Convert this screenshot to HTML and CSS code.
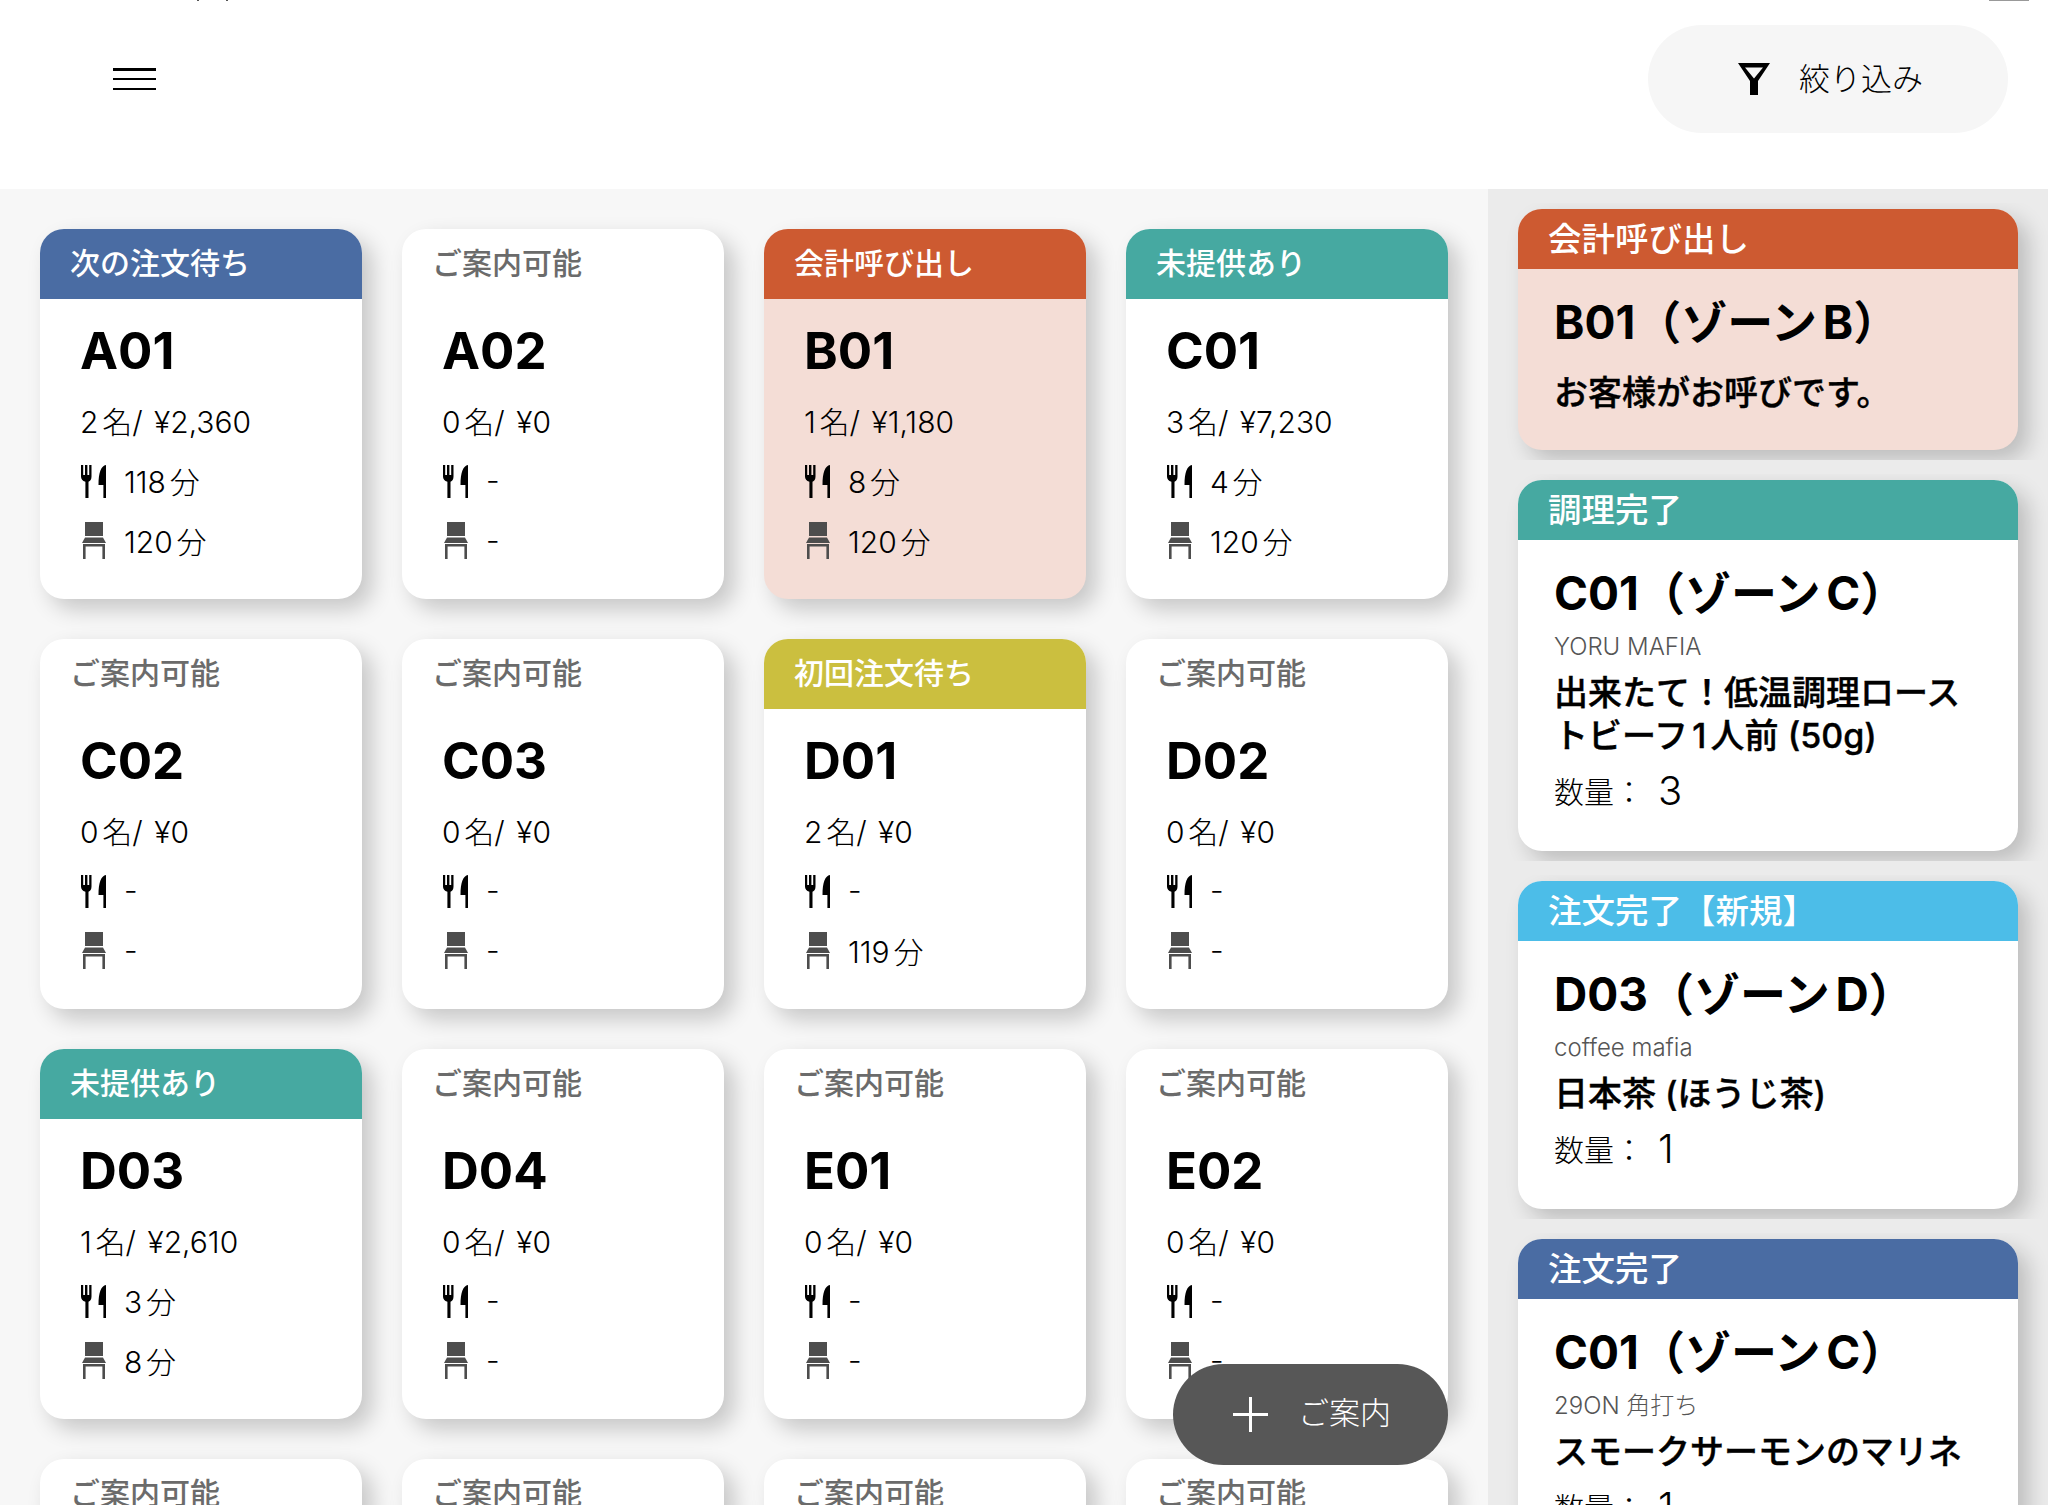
FILE: index.html
```html
<!DOCTYPE html>
<html lang="ja">
<head>
<meta charset="utf-8">
<title>テーブル</title>
<link rel="stylesheet" href="styles.css">
</head>
<body>
<svg class="defs" width="0" height="0">
  <symbol id="i-food" viewBox="0 0 26 33">
    <path d="M1 0h2.200v10H5V0h2.400v10h1.800V0h2.300v11.500c0 3-1.200 4.600-3 5.300V33H5.400V16.800c-2.900-.8-4.400-2.600-4.400-5.300z"/>
    <path d="M26 0c-4.800 1-7.500 7-7.500 20h4.900v13H26z"/>
  </symbol>
  <symbol id="i-seat" viewBox="0 0 24 37">
    <path d="M3 0h18v14H3z"/>
    <path d="M3 15.500h18l3 5.500H0z"/>
    <path d="M1 22h22v15h-2.600V24.500H3.600V37H1z"/>
  </symbol>
</svg>

<header class="topbar">
  <span class="clip-mark clip-a"></span>
  <span class="clip-mark clip-b"></span>
  <span class="clip-bar"></span>
  <button class="menu" aria-label="メニュー"><span></span><span></span><span></span></button>
  <button class="filter">
    <svg class="filter-icon" viewBox="0 0 32 32"><path fill-rule="evenodd" d="M0 0h32L20 18v14h-8V18zM7 4.500 16 15.500 25 4.500z"/></svg>
    <span class="filter-label">絞り込み</span>
  </button>
</header>

<div class="layout">
  <main class="floor">
    <article class="table"><h3 class="tag blue">次の注文待ち</h3><div class="body"><h2>A01</h2><p>2名/ ¥2,360</p><p><svg class="ico"><use href="#i-food"/></svg>118分</p><p><svg class="ico seat"><use href="#i-seat"/></svg>120分</p></div></article>
    <article class="table"><h3 class="tag free">ご案内可能</h3><div class="body"><h2>A02</h2><p>0名/ ¥0</p><p><svg class="ico"><use href="#i-food"/></svg>-</p><p><svg class="ico seat"><use href="#i-seat"/></svg>-</p></div></article>
    <article class="table pink"><h3 class="tag orange">会計呼び出し</h3><div class="body"><h2>B01</h2><p>1名/ ¥1,180</p><p><svg class="ico"><use href="#i-food"/></svg>8分</p><p><svg class="ico seat"><use href="#i-seat"/></svg>120分</p></div></article>
    <article class="table"><h3 class="tag teal">未提供あり</h3><div class="body"><h2>C01</h2><p>3名/ ¥7,230</p><p><svg class="ico"><use href="#i-food"/></svg>4分</p><p><svg class="ico seat"><use href="#i-seat"/></svg>120分</p></div></article>

    <article class="table"><h3 class="tag free">ご案内可能</h3><div class="body"><h2>C02</h2><p>0名/ ¥0</p><p><svg class="ico"><use href="#i-food"/></svg>-</p><p><svg class="ico seat"><use href="#i-seat"/></svg>-</p></div></article>
    <article class="table"><h3 class="tag free">ご案内可能</h3><div class="body"><h2>C03</h2><p>0名/ ¥0</p><p><svg class="ico"><use href="#i-food"/></svg>-</p><p><svg class="ico seat"><use href="#i-seat"/></svg>-</p></div></article>
    <article class="table"><h3 class="tag yellow">初回注文待ち</h3><div class="body"><h2>D01</h2><p>2名/ ¥0</p><p><svg class="ico"><use href="#i-food"/></svg>-</p><p><svg class="ico seat"><use href="#i-seat"/></svg>119分</p></div></article>
    <article class="table"><h3 class="tag free">ご案内可能</h3><div class="body"><h2>D02</h2><p>0名/ ¥0</p><p><svg class="ico"><use href="#i-food"/></svg>-</p><p><svg class="ico seat"><use href="#i-seat"/></svg>-</p></div></article>

    <article class="table"><h3 class="tag teal">未提供あり</h3><div class="body"><h2>D03</h2><p>1名/ ¥2,610</p><p><svg class="ico"><use href="#i-food"/></svg>3分</p><p><svg class="ico seat"><use href="#i-seat"/></svg>8分</p></div></article>
    <article class="table"><h3 class="tag free">ご案内可能</h3><div class="body"><h2>D04</h2><p>0名/ ¥0</p><p><svg class="ico"><use href="#i-food"/></svg>-</p><p><svg class="ico seat"><use href="#i-seat"/></svg>-</p></div></article>
    <article class="table"><h3 class="tag free">ご案内可能</h3><div class="body"><h2>E01</h2><p>0名/ ¥0</p><p><svg class="ico"><use href="#i-food"/></svg>-</p><p><svg class="ico seat"><use href="#i-seat"/></svg>-</p></div></article>
    <article class="table"><h3 class="tag free">ご案内可能</h3><div class="body"><h2>E02</h2><p>0名/ ¥0</p><p><svg class="ico"><use href="#i-food"/></svg>-</p><p><svg class="ico seat"><use href="#i-seat"/></svg>-</p></div></article>

    <article class="table"><h3 class="tag free">ご案内可能</h3></article>
    <article class="table"><h3 class="tag free">ご案内可能</h3></article>
    <article class="table"><h3 class="tag free">ご案内可能</h3></article>
    <article class="table"><h3 class="tag free">ご案内可能</h3></article>

    <button class="fab">
      <svg class="fab-plus" viewBox="0 0 35 35"><path d="M16 0h3v16h16v3H19v16h-3V19H0v-3h16z"/></svg>
      <span class="fab-label">ご案内</span>
    </button>
  </main>

  <aside class="feed">
    <div class="feed-item"><section class="notice pink"><h3 class="bar orange">会計呼び出し</h3><div class="notice-body"><h2>B01（ゾーンB）</h2><p class="msg">お客様がお呼びです。</p></div></section></div>
    <div class="feed-item"><section class="notice"><h3 class="bar teal">調理完了</h3><div class="notice-body"><h2>C01（ゾーンC）</h2><p class="shop">YORU MAFIA</p><p class="dish">出来たて！低温調理ローストビーフ1人前 (50g)</p><p class="qty">数量：<b>3</b></p></div></section></div>
    <div class="feed-item"><section class="notice"><h3 class="bar sky">注文完了【新規】</h3><div class="notice-body"><h2>D03（ゾーンD）</h2><p class="shop">coffee mafia</p><p class="dish">日本茶 (ほうじ茶)</p><p class="qty">数量：<b>1</b></p></div></section></div>
    <div class="feed-item"><section class="notice"><h3 class="bar blue">注文完了</h3><div class="notice-body"><h2>C01（ゾーンC）</h2><p class="shop">29ON 角打ち</p><p class="dish">スモークサーモンのマリネ</p><p class="qty">数量：<b>1</b></p></div></section></div>
  </aside>
</div>
</body>
</html>
```

FILE: styles.css
```css
* { box-sizing: border-box; }
html, body { margin: 0; height: 100%; overflow: hidden; }
body {
  font-family: "Inter", "Noto Sans CJK JP", sans-serif;
  color: #000;
  background: #fff;
  display: flex;
  flex-direction: column;
  text-autospace: normal;
}
.defs { position: absolute; }
h2, h3, p { margin: 0; }
button { font: inherit; border: 0; padding: 0; color: inherit; }

/* top bar */
.topbar {
  position: relative;
  flex: none;
  height: 189px;
  display: flex;
  justify-content: space-between;
  align-items: flex-start;
  padding: 25px 40px 0 113px;
}
.clip-mark { position: absolute; top: 0; width: 2px; height: 1px; background: #555; }
.clip-a { left: 197px; }
.clip-b { left: 226px; }
.clip-bar { position: absolute; top: 0; left: 1989px; width: 40px; height: 1px; background: #999; }
.menu {
  margin-top: 43px;
  width: 43px;
  height: 22px;
  background: none;
  display: flex;
  flex-direction: column;
  justify-content: space-between;
}
.menu span { display: block; height: 2.500px; background: #000; }
.filter {
  width: 360px;
  height: 108px;
  border-radius: 54px;
  background: #f6f6f6;
  display: flex;
  align-items: center;
  padding-left: 90px;
  gap: 29px;
  font-size: 31px;
  font-weight: 300;
}
.filter-label { padding-bottom: 6px; }
.filter-icon { width: 32px; height: 32px; }

/* page layout */
.layout { flex: 1; min-height: 0; display: flex; }
.floor {
  position: relative;
  width: 1488px;
  flex: none;
  background: #f7f7f7;
  padding: 40px;
  display: grid;
  grid-template-columns: repeat(4, 322px);
  grid-auto-rows: 370px;
  gap: 40px;
  overflow: hidden;
}
.table {
  background: #fff;
  border-radius: 24px;
  box-shadow: 10px 10px 22px rgba(0, 0, 0, .2);
}
.tag {
  height: 70px;
  padding-left: 30px;
  border-radius: 24px 24px 0 0;
  font-size: 30px;
  font-weight: 500;
  line-height: 68px;
  color: #fff;
}
.free { color: #6b6b6b; }
.blue { background: #4a6ca3; }
.orange { background: #cd5a31; }
.teal { background: #46a9a1; }
.yellow { background: #cbbf3f; }
.sky { background: #4cbde8; }
.pink { background: #f4ddd6; }

.body { padding: 22px 20px 0 40px; }
.body h2 { font-size: 51px; line-height: 60px; font-weight: 700; margin-bottom: 9px; }
.body p {
  display: flex;
  align-items: center;
  height: 59.500px;
  font-size: 30px;
  font-weight: 300;
  word-spacing: 3px;
}
.body h2 + p { margin-bottom: 1px; }
.ico { width: 26px; height: 33px; margin: 3px 18px 0 0; flex: none; }
.ico.seat { width: 24px; height: 37px; margin: 2px 18px 0 2px; fill: #4d4d4d; }

.fab {
  position: absolute;
  left: 1173px;
  top: 1175px;
  width: 275px;
  height: 101px;
  border-radius: 51px;
  background: #575757;
  color: #fff;
  display: flex;
  align-items: center;
  padding-left: 60px;
  gap: 30px;
  font-size: 31px;
  font-weight: 300;
}
.fab-label { padding-bottom: 8px; }
.fab-plus { width: 35px; height: 35px; fill: #fff; }

/* notification feed */
.feed {
  flex: 1;
  background: #ebebeb;
  padding-top: 14px;
  overflow: hidden;
}
.feed-item {
  overflow: hidden;
  padding: 6px 30px 10px;
  margin-bottom: 14px;
}
.notice {
  background: #fff;
  border-radius: 24px;
  box-shadow: 10px 10px 22px rgba(0, 0, 0, .2);
}
.notice.pink { background: #f4ddd6; }
.bar {
  height: 60px;
  padding-left: 30px;
  border-radius: 24px 24px 0 0;
  font-size: 33.500px;
  font-weight: 500;
  line-height: 60px;
  color: #fff;
}
.notice-body { padding: 23px 30px 36px 36px; }
.notice-body h2 { font-size: 46px; line-height: 60px; font-weight: 700; }
.shop { font-size: 24px; line-height: 36px; color: #555; font-weight: 300; margin-top: 6px; }
.dish {
  font-size: 34px;
  line-height: 43px;
  font-weight: 500;
  -webkit-text-stroke: .4px #000;
  margin-top: 6px;
}
.qty {
  display: flex;
  align-items: center;
  height: 50px;
  margin-top: 8px;
  font-family: "Noto Sans CJK JP", sans-serif;
  font-size: 30px;
  font-weight: 300;
}
.qty b { margin-left: 14px; font-family: "Inter", sans-serif; font-size: 40px; font-weight: 300; }
.msg {
  font-size: 34px;
  line-height: 44px;
  font-weight: 500;
  -webkit-text-stroke: .4px #000;
  margin: 19px 0 -1px;
}
```
